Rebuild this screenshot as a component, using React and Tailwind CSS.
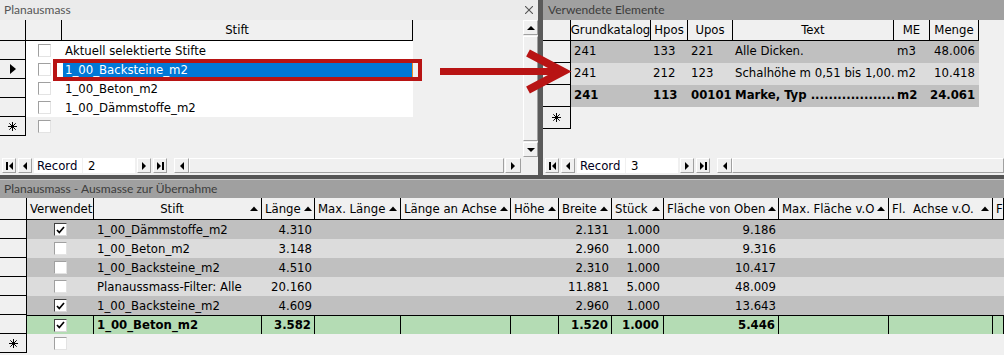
import React from "react";

function Glyph({ kind }) {
  if (kind === "first")
    return (
      <svg width="7" height="8" viewBox="0 0 7 8">
        <rect x="0" y="0" width="2" height="8" fill="#000" />
        <path d="M7 0L3 4L7 8Z" fill="#000" />
      </svg>
    );
  if (kind === "last")
    return (
      <svg width="7" height="8" viewBox="0 0 7 8">
        <path d="M0 0L4 4L0 8Z" fill="#000" />
        <rect x="5" y="0" width="2" height="8" fill="#000" />
      </svg>
    );
  if (kind === "prev")
    return (
      <svg width="4" height="8" viewBox="0 0 4 8">
        <path d="M4 0L0 4L4 8Z" fill="#000" />
      </svg>
    );
  if (kind === "next")
    return (
      <svg width="4" height="8" viewBox="0 0 4 8">
        <path d="M0 0L4 4L0 8Z" fill="#000" />
      </svg>
    );
  if (kind === "up")
    return (
      <svg width="8" height="4" viewBox="0 0 8 4">
        <path d="M0 4L4 0L8 4Z" fill="#000" />
      </svg>
    );
  return (
    <svg width="8" height="4" viewBox="0 0 8 4">
      <path d="M0 0L4 4L8 0Z" fill="#000" />
    </svg>
  );
}

function Btn({ kind, className = "w-[14px] h-[15px]" }) {
  return (
    <div
      className={`flex shrink-0 items-center justify-center border border-t-white border-l-white border-r-[#a0a0a0] border-b-[#a0a0a0] bg-[#f0f0f0] ${className}`}
    >
      <Glyph kind={kind} />
    </div>
  );
}

function SortArrow() {
  return (
    <svg width="8" height="5" viewBox="0 0 8 5" className="ml-[3px] shrink-0">
      <path d="M0 5L4 0.5L8 5Z" fill="#000" />
    </svg>
  );
}

function Star() {
  return (
    <svg width="9" height="9" viewBox="0 0 9 9">
      <g stroke="#000" strokeWidth="1">
        <line x1="4.5" y1="0" x2="4.5" y2="9" />
        <line x1="0" y1="4.5" x2="9" y2="4.5" />
        <line x1="1.3" y1="1.3" x2="7.7" y2="7.7" />
        <line x1="7.7" y1="1.3" x2="1.3" y2="7.7" />
      </g>
    </svg>
  );
}

function Check({ checked }) {
  return (
    <div
      className={`flex h-[13px] w-[13px] items-center justify-center border bg-white ${
        checked
          ? "border-t-[#404040] border-l-[#404040] border-r-[#d8d8d8] border-b-[#d8d8d8]"
          : "border-t-[#a0a0a0] border-l-[#a0a0a0] border-r-[#e3e3e3] border-b-[#e3e3e3]"
      }`}
    >
      {checked ? (
        <svg width="9" height="8" viewBox="0 0 9 8">
          <path d="M1 4L3.3 6.5L8 1" fill="none" stroke="#000" strokeWidth="1.7" />
        </svg>
      ) : null}
    </div>
  );
}

function NavBar({ record, corner }) {
  return (
    <div className="flex h-[18px] items-start pt-px pl-[2px] text-[13px]">
      <Btn kind="first" />
      <Btn kind="prev" className="ml-[2px] h-[15px] w-[14px]" />
      <div className="ml-[2px] flex h-[15px] w-[48px] items-center bg-white pl-[3px] text-[#000020]">Record</div>
      <div className="ml-px flex h-[15px] w-[52px] items-center bg-white pl-[5px]">{record}</div>
      <Btn kind="next" className="ml-[2px] h-[15px] w-[14px]" />
      <Btn kind="last" className="ml-[2px] h-[15px] w-[14px]" />
      <div className="ml-[7px] flex h-[15px] flex-1">
        <Btn kind="prev" className="h-[15px] w-[15px]" />
        <div className="flex-1 border border-t-white border-l-white border-r-[#a0a0a0] border-b-[#a0a0a0] bg-[#f0f0f0]" />
        {corner ? <Btn kind="next" className="ml-px h-[15px] w-[16px]" /> : null}
      </div>
      {corner ? <div className="w-[17px]" /> : null}
    </div>
  );
}

function Selector({ w, h, children }) {
  return (
    <div className={`flex shrink-0 items-center justify-center border-r border-b border-black bg-[#f0f0f0] ${w} ${h}`}>
      {children}
    </div>
  );
}

function TopLeft() {
  const rows = ["Aktuell selektierte Stifte", "1_00_Backsteine_m2", "1_00_Beton_m2", "1_00_Dämmstoffe_m2"];
  return (
    <div className="flex w-[538px] shrink-0 flex-col bg-[#f0f0f0]">
      <div className="flex h-[20px] items-center justify-between bg-[#ebebeb] pl-[4px] pr-[5px] font-['Lato',sans-serif] text-[12px] text-[#555]">
        <span>Planausmass</span>
        <svg width="8" height="8" viewBox="0 0 8 8">
          <g stroke="#555" strokeWidth="1.1">
            <line x1="0" y1="0" x2="8" y2="8" />
            <line x1="8" y1="0" x2="0" y2="8" />
          </g>
        </svg>
      </div>
      <div className="flex h-[137px]">
        <div className="flex flex-1 flex-col">
          <div className="flex h-[21px]">
            <Selector w="w-[26px]" h="h-[21px]" />
            <div className="h-[21px] w-[36px] border-r border-b border-black" />
            <div className="flex h-[21px] w-[351px] items-center justify-center border-r border-b border-black">Stift</div>
          </div>
          {rows.map((r, i) => (
            <div key={r} className="flex h-[19px]">
              <Selector w="w-[26px]" h="h-[19px]">
                {i === 1 ? (
                  <svg width="6" height="10" viewBox="0 0 6 10">
                    <path d="M0 0L6 5L0 10Z" fill="#000" />
                  </svg>
                ) : null}
              </Selector>
              <div className="flex w-[36px] items-center justify-center bg-white">
                <Check />
              </div>
              {i === 1 ? (
                <div className="flex w-[351px] items-center bg-white pl-px">
                  <div className="flex h-[17px] flex-1 items-center bg-[#0078d7] pl-[2px] text-white">{r}</div>
                  <div className="h-[17px] w-px bg-[#f08a24]" />
                </div>
              ) : (
                <div className="flex w-[351px] items-center bg-white pl-[3px]">{r}</div>
              )}
            </div>
          ))}
          <div className="flex h-[19px]">
            <Selector w="w-[26px]" h="h-[19px]">
              <Star />
            </Selector>
            <div className="flex w-[36px] items-center justify-center">
              <Check />
            </div>
          </div>
        </div>
        <div className="flex w-[15px] flex-col">
          <Btn kind="up" className="h-[15px] w-[15px]" />
          <div className="my-px flex-1 border border-t-white border-l-white border-r-[#a0a0a0] border-b-[#a0a0a0]" />
          <Btn kind="down" className="h-[15px] w-[15px]" />
        </div>
      </div>
      <NavBar record="2" corner />
    </div>
  );
}

function TopRight() {
  const cols = [
    { t: "Grundkatalog", w: "w-[80px]" },
    { t: "Hpos", w: "w-[37px]" },
    { t: "Upos", w: "w-[45px]" },
    { t: "Text", w: "w-[161px]" },
    { t: "ME", w: "w-[36px]" },
    { t: "Menge", w: "w-[49px]" },
  ];
  const rows = [
    { bg: "bg-[#c0c0c0]", v: ["241", "133", "221", "Alle Dicken.", "m3", "48.006"] },
    { bg: "bg-[#dcdcdc]", v: ["241", "212", "123", "Schalhöhe m 0,51 bis 1,00.", "m2", "10.418"] },
    { bg: "bg-[#c0c0c0] font-bold", v: ["241", "113", "00101", "Marke, Typ ...................", "m2", "24.061"] },
  ];
  return (
    <div className="flex flex-1 flex-col bg-[#f0f0f0]">
      <div className="flex h-[20px] items-center bg-[#a0a0a0] pl-[5px] font-['Lato',sans-serif] text-[12px] text-[#3c3c3c]">
        Verwendete Elemente
      </div>
      <div className="flex h-[137px] flex-col">
        <div className="flex h-[21px]">
          <Selector w="w-[28px]" h="h-[21px]" />
          {cols.map((c) => (
            <div key={c.t} className={`flex h-[21px] items-center justify-center border-r border-b border-black ${c.w}`}>
              {c.t}
            </div>
          ))}
        </div>
        {rows.map((r, i) => (
          <div key={i} className="flex h-[22px]">
            <Selector w="w-[28px]" h="h-[22px]" />
            <div className={`flex h-[22px] w-[408px] items-center pb-[2px] ${r.bg}`}>
              <div className="w-[80px] overflow-hidden whitespace-nowrap pl-[3px]">{r.v[0]}</div>
              <div className="w-[37px] pl-[2px]">{r.v[1]}</div>
              <div className="w-[45px] pl-[3px]">{r.v[2]}</div>
              <div className="w-[161px] overflow-hidden whitespace-nowrap pl-[2px]">{r.v[3]}</div>
              <div className="w-[36px] pl-[3px]">{r.v[4]}</div>
              <div className="w-[49px] pr-[4px] text-right">{r.v[5]}</div>
            </div>
          </div>
        ))}
        <div className="flex h-[22px]">
          <Selector w="w-[28px]" h="h-[22px]">
            <Star />
          </Selector>
        </div>
      </div>
      <NavBar record="3" />
    </div>
  );
}

const bottomCols = [
  { t: "Verwendet", w: "w-[67px]", arrow: false },
  { t: "Stift", w: "w-[168px]", arrow: true, center: true },
  { t: "Länge", w: "w-[53px]", arrow: true },
  { t: "Max. Länge", w: "w-[86px]", arrow: true },
  { t: "Länge an Achse", w: "w-[110px]", arrow: true },
  { t: "Höhe", w: "w-[48px]", arrow: true },
  { t: "Breite", w: "w-[53px]", arrow: true },
  { t: "Stück", w: "w-[52px]", arrow: true },
  { t: "Fläche von Oben", w: "w-[115px]", arrow: true },
  { t: "Max. Fläche v.O", w: "w-[110px]", arrow: true },
  { t: "Fl.  Achse v.O.", w: "w-[104px]", arrow: true },
  { t: "F", w: "w-[11px]", arrow: false },
];

const bottomRows = [
  { c: true, s: "1_00_Dämmstoffe_m2", l: "4.310", b: "2.131", st: "1.000", f: "9.186", bg: "bg-[#c0c0c0]" },
  { c: false, s: "1_00_Beton_m2", l: "3.148", b: "2.960", st: "1.000", f: "9.316", bg: "bg-[#dcdcdc]" },
  { c: false, s: "1_00_Backsteine_m2", l: "4.510", b: "2.310", st: "1.000", f: "10.417", bg: "bg-[#c0c0c0]" },
  { c: false, s: "Planaussmass-Filter: Alle", l: "20.160", b: "11.881", st: "5.000", f: "48.009", bg: "bg-[#dcdcdc]" },
  { c: true, s: "1_00_Backsteine_m2", l: "4.609", b: "2.960", st: "1.000", f: "13.643", bg: "bg-[#c0c0c0]" },
  { c: true, s: "1_00_Beton_m2", l: "3.582", b: "1.520", st: "1.000", f: "5.446", cur: true },
];

function Bottom() {
  return (
    <div className="flex flex-1 flex-col bg-[#f0f0f0]">
      <div className="flex h-[19px] items-center border-t border-[#c8c8c8] bg-[#a0a0a0] pl-[4px] font-['Lato',sans-serif] text-[12px] text-[#3c3c3c]">
        Planausmass - Ausmasse zur Übernahme
      </div>
      <div className="flex h-[22px]">
        <Selector w="w-[27px]" h="h-[22px]" />
        {bottomCols.map((c) => (
          <div
            key={c.t}
            className={`flex h-[22px] shrink-0 items-center overflow-hidden whitespace-pre border-r border-b border-black pl-[3px] pr-[3px] ${c.w}`}
          >
            <span className={c.center ? "flex-1 text-center" : "flex-1"}>{c.t}</span>
            {c.arrow ? <SortArrow /> : null}
          </div>
        ))}
      </div>
      {bottomRows.map((r, i) => {
        const cell = r.cur ? "border-t border-r border-t-black border-r-black" : "";
        return (
          <div key={i} className={`flex h-[19px] ${r.cur ? "bg-[#b4dcb4] font-bold" : r.bg}`}>
            <Selector w="w-[27px]" h="h-[19px]" />
            <div className={`flex w-[67px] shrink-0 items-center justify-center ${cell}`}>
              <Check checked={r.c} />
            </div>
            <div className={`flex w-[168px] shrink-0 items-center pl-[3px] ${cell}`}>{r.s}</div>
            <div className={`flex w-[53px] shrink-0 items-center justify-end pr-[3px] ${cell}`}>{r.l}</div>
            <div className={`w-[86px] shrink-0 ${cell}`} />
            <div className={`w-[110px] shrink-0 ${cell}`} />
            <div className={`w-[48px] shrink-0 ${cell}`} />
            <div className={`flex w-[53px] shrink-0 items-center justify-end pr-[3px] ${cell}`}>{r.b}</div>
            <div className={`flex w-[52px] shrink-0 items-center justify-end pr-[4px] ${cell}`}>{r.st}</div>
            <div className={`flex w-[115px] shrink-0 items-center justify-end pr-[3px] ${cell}`}>{r.f}</div>
            <div className={`w-[110px] shrink-0 ${cell}`} />
            <div className={`w-[104px] shrink-0 ${cell}`} />
            <div className={`flex-1 ${cell}`} />
          </div>
        );
      })}
      <div className="flex h-[19px]">
        <Selector w="w-[27px]" h="h-[19px]">
          <Star />
        </Selector>
        <div className="flex w-[67px] items-center justify-center">
          <Check />
        </div>
      </div>
    </div>
  );
}

export default function App() {
  return (
    <div className="relative flex h-[355px] w-[1004px] flex-col overflow-hidden bg-[#f0f0f0] font-['DejaVu_Sans_Condensed','DejaVu_Sans',sans-serif] text-[13px] text-black">
      <div className="flex h-[175px]">
        <TopLeft />
        <div className="w-[5px] shrink-0 bg-[#5a5a5a]" />
        <TopRight />
      </div>
      <div className="h-[4px] bg-[#555]" />
      <Bottom />

      {/* annotation: red box + arrow */}
      <div className="pointer-events-none absolute left-[53px] top-[59px] h-[22px] w-[369px] border-[4px] border-[#b81414]" />
      <svg className="pointer-events-none absolute left-0 top-0" width="1004" height="355">
        <line x1="440" y1="71.5" x2="558" y2="71.5" stroke="#b81414" strokeWidth="7" />
        <polyline points="528,53 563,71.5 528,90" fill="none" stroke="#b81414" strokeWidth="8" strokeLinejoin="miter" />
      </svg>
    </div>
  );
}
